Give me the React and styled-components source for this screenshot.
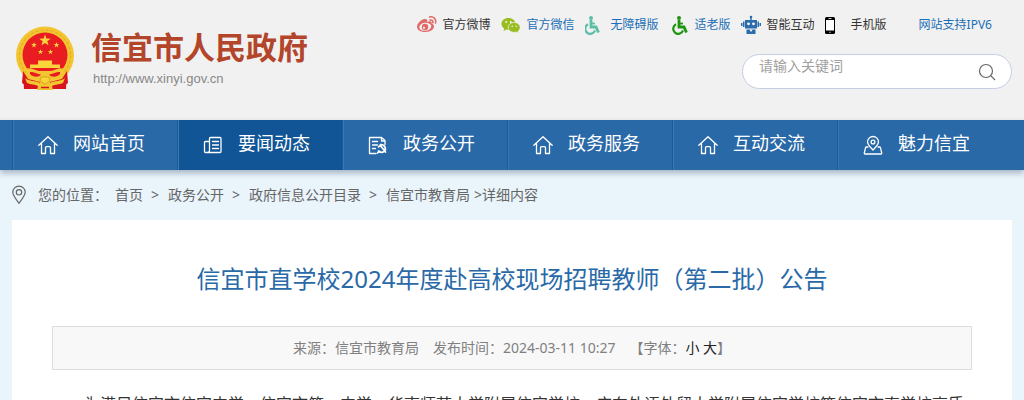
// Xinyi government portal, article page

// External Packages
import React from 'react';
import styled, { createGlobalStyle } from 'styled-components';

const GlobalStyle = createGlobalStyle`
    * {
        box-sizing: border-box;
    }

    body {
        margin: 0;
        background-color: #eaf4fb;
        font-family: 'Noto Sans', 'Noto Sans CJK SC', sans-serif;
        font-size: 14px;
        color: #333;
    }

    a {
        color: inherit;
        text-decoration: none;
    }
`;

const Container = styled.div`
    max-width: 1200px;
    margin: 0 auto;
    padding: 0 12px;
`;

const HeaderWrapper = styled.header`
    background-color: #f1f1f1;
`;

const HeaderInner = styled(Container)`
    display: flex;
    justify-content: space-between;
    min-height: 120px;
`;

const Brand = styled.a`
    display: flex;
    align-items: flex-start;
    gap: 16px;
    padding: 26px 0 0 3px;
`;

const BrandText = styled.div`
    display: flex;
    flex-direction: column;
    white-space: nowrap;
`;

const BrandName = styled.span`
    font-size: 31px;
    line-height: 42px;
    font-weight: 700;
    color: #b2452a;
`;

const BrandUrl = styled.span`
    font-family: 'Liberation Sans', sans-serif;
    font-size: 13px;
    line-height: 22px;
    color: #888;
    padding-left: 2px;
`;

const HeaderSide = styled.div`
    display: flex;
    flex-direction: column;
    align-items: flex-end;
    padding-top: 14px;
`;

const QuickLinks = styled.nav`
    display: flex;
    gap: 10px;
    padding-right: 20px;
    white-space: nowrap;
`;

const QuickLink = styled.a`
    display: flex;
    align-items: center;
    gap: 6px;
    height: 22px;
    font-size: 12px;
    line-height: 22px;
    color: ${props => props.$blue ? '#1a6fb5' : '#333'};
    margin-left: ${props => props.$apart ? '22px' : '0'};
`;

const SearchBox = styled.form`
    display: flex;
    width: 270px;
    height: 35px;
    margin-top: 18px;
    padding: 0 14px 0 16px;
    background-color: white;
    border: 1px solid #c3cfe2;
    border-radius: 18px;
`;

const SearchInput = styled.input`
    flex: 1;
    min-width: 0;
    height: 22px;
    padding: 0;
    border: none;
    outline: none;
    background-color: transparent;
    font-family: inherit;
    font-size: 14px;
    line-height: 22px;

    &::placeholder {
        color: #a0a0a0;
        opacity: 1;
    }
`;

const SearchButton = styled.button`
    display: flex;
    align-items: center;
    padding: 0;
    border: none;
    background-color: transparent;
    cursor: pointer;
`;

const NavBar = styled.nav`
    position: relative;
    background-color: #2969a7;
    box-shadow: 0 3px 6px rgba(60, 80, 110, 0.4);
`;

const NavList = styled(Container)`
    display: flex;
`;

const NavItem = styled.a`
    display: flex;
    flex: 0 1 165px;
    gap: 14px;
    height: 50px;
    padding-left: 24px;
    border-left: 1px solid #1c5a98;
    box-shadow: inset 1px 0 0 #3b78b3;
    background-color: ${props => props.$active ? '#115596' : 'transparent'};
    font-size: 18px;
    line-height: 46px;
    color: white;
    white-space: nowrap;

    svg {
        margin-top: 14px;
    }
`;

const Breadcrumb = styled(Container)`
    display: flex;
    align-items: center;
    height: 50px;
    line-height: 22px;
    color: #666;
    white-space: nowrap;
`;

const CrumbLabel = styled.span`
    margin: 0 7px 0 12px;
`;

const Crumb = styled.a`
    &:not(:last-of-type)::after {
        content: '>';
        margin: 0 9px 0 8px;
    }
`;

const CrumbCurrent = styled.span`
    margin-left: 4px;
`;

const Article = styled.article`
    padding: 38px 40px 40px;
    background-color: white;
`;

const ArticleTitle = styled.h1`
    margin: 0;
    font-size: 24px;
    line-height: 42px;
    font-weight: 400;
    text-align: center;
    color: #2969a7;
`;

const ArticleMeta = styled.div`
    display: flex;
    justify-content: center;
    gap: 14px;
    margin: 26px 0 18px;
    padding: 10px 0;
    background-color: #f8f8f8;
    border: 1px solid #ddd;
    line-height: 22px;
    color: #808080;
`;

const SizeButton = styled.button`
    padding: 0;
    border: none;
    background-color: transparent;
    font: inherit;
    color: #222;
    cursor: pointer;
`;

const ArticleText = styled.p`
    margin: 0;
    font-size: 16px;
    line-height: 32px;
    text-indent: 2em;
`;

const star = (cx, cy, r) => {
    const points = [];
    for (let i = 0; i < 10; i++) {
        const radius = i % 2 ? r * 0.4 : r;
        const angle = Math.PI * (i / 5 - 0.5);
        points.push(`${(cx + radius * Math.cos(angle)).toFixed(2)},${(cy + radius * Math.sin(angle)).toFixed(2)}`);
    }
    return points.join(' ');
};

const Emblem = () => (
    <svg width="60" height="64" viewBox="0 0 60 64" aria-hidden="true">
        <path d="M8 46 9 63h42l1-17z" fill="#d8141c" />
        <circle cx="30" cy="29.500" r="29" fill="#f3c531" />
        <circle cx="30" cy="29.500" r="25.500" fill="none" stroke="#dfa825" strokeWidth="1" strokeDasharray="3 2" />
        <circle cx="30" cy="29" r="22.500" fill="#e91c22" />
        <g fill="#f9d43a">
            <polygon points={star(30, 14.5, 6)} />
            <polygon points={star(19, 19, 3)} />
            <polygon points={star(41.500, 19, 3)} />
            <polygon points={star(25.500, 26, 2.8)} />
            <polygon points={star(35.500, 26, 2.8)} />
            <path d="M23 34.500h14v4h8v3.500H15v-3.500h8z" />
        </g>
        <path d="M11 43c4-2 8 1 13 2h12c5-1 9-4 13-2v8c-5 4-11 3-15 6h-8c-4-3-10-2-15-6z" fill="#f3c531" />
        <path d="M15 46c5 0 7 2 11 2.500-2 3-8 3-11-.5zM45 46c-5 0-7 2-11 2.500 2 3 8 3 11-.5z" fill="#e91c22" />
        <path d="M8 45l5 8 12 3-1 7H9l1-4-3-2zM52 45l-5 8-12 3 1 7h15l-1-4 3-2z" fill="#d8141c" />
        <path d="M10 52c5 4 10 2 15 5h10c5-3 10-1 15-5l-2 5c-4 2-8 1-11 3l1 4H22l1-4c-3-2-7-1-11-3z" fill="#f3c531" />
        <path d="M26 51h8l1 4-5 3-5-3z" fill="#f9d43a" stroke="#d39a1c" strokeWidth=".8" />
        <path d="M26 61.500h8" stroke="#d8141c" strokeWidth="1.500" />
    </svg>
);

const WeiboIcon = () => (
    <svg width="20" height="20" viewBox="0 0 20 20" aria-hidden="true">
        <path d="M7.500 4C4 4.500 0 8.500 0 12c0 3 4 5 8.500 5 5 0 8.500-2.800 8.500-5.500 0-1.700-1.400-2.500-2.500-2.900.8-2.400-1-3-4.500-1.700C10.600 5 10 3.800 7.500 4z" fill="#e06a68" />
        <ellipse cx="8.300" cy="11.800" rx="6" ry="4" fill="#f1f1f1" transform="rotate(-8 8.300 11.800)" />
        <circle cx="8" cy="12" r="3.200" fill="#e06a68" />
        <circle cx="7" cy="12.800" r="1.100" fill="#f1f1f1" />
        <path d="M12.500 2c4-1 7 2 6 6M13 5c2-.4 3.300.8 2.800 2.800" fill="none" stroke="#e06a68" strokeWidth="1.500" strokeLinecap="round" />
    </svg>
);

const WechatIcon = () => (
    <svg width="20" height="20" viewBox="0 0 20 20" aria-hidden="true">
        <path d="M7.500 3C3.300 3 .5 5.500.5 8.800c0 2 1 3.600 2.700 4.700L2.600 16l2.700-1.400 2.200.3c4 0 7-2.600 7-6S11.500 3 7.500 3z" fill="#99bd1f" />
        <path d="M13.200 7.500c3.400 0 6 2.200 6 5 0 1.600-.9 2.900-2.200 3.800l.4 1.900-2.200-1.100-2 .3c-3.400 0-6-2.100-6-4.900s2.600-5 6-5z" fill="#99bd1f" stroke="#f1f1f1" strokeWidth=".8" />
        <g fill="#f1f1f1">
            <circle cx="5.200" cy="7" r="1" />
            <circle cx="9.800" cy="7" r="1" />
            <circle cx="11.200" cy="11.200" r=".8" />
            <circle cx="15.200" cy="11.200" r=".8" />
        </g>
    </svg>
);

// shift moves the figure sideways inside its 20px cell
const WheelchairIcon = ({ color, shift }) => (
    <svg width="20" height="20" viewBox={`${shift} 0 20 20`} aria-hidden="true">
        <circle cx="8" cy="3" r="2" fill={color} />
        <path d="M8 5v7h5l2.500 5.500" fill="none" stroke={color} strokeWidth="2.800" />
        <path d="M8 8.500h4" stroke={color} strokeWidth="1.800" />
        <path d="M5 9.300a5 5 0 1 0 7 6" fill="none" stroke={color} strokeWidth="2.200" />
    </svg>
);

const RobotIcon = () => (
    <svg width="20" height="20" viewBox="0 0 20 20" aria-hidden="true" fill="#2c6cab">
        <path d="M9.300 2h1.400v3H9.300zM4 5h12v8.500H4zM0 8h1.500v3H0zM18.500 8H20v3h-1.500zM2 6.500h1.500v5.500H2zM16.500 6.500H18v5.500h-1.500zM5.500 14.500h9V19h-9z" />
        <circle cx="10" cy="2" r="1.300" />
        <circle cx="7.500" cy="8.800" r="1.400" fill="#fff" />
        <circle cx="12.500" cy="8.800" r="1.400" fill="#fff" />
        <path d="M8.500 14.500h3L10 17z" fill="#fff" />
    </svg>
);

const PhoneIcon = () => (
    <svg width="20" height="20" viewBox="0 0 20 20" aria-hidden="true">
        <rect x="0" y="2" width="10" height="17" rx="1.500" fill="#000" />
        <path d="M1 5h8v10.500H1z" fill="#fff" />
        <path d="M3.500 3.500h3M4.300 17.300h1.400" stroke="#fff" strokeWidth=".8" />
    </svg>
);

const SearchIcon = () => (
    <svg width="20" height="20" viewBox="0 0 20 20" fill="none" stroke="#666" strokeWidth="1.200" aria-hidden="true">
        <circle cx="9" cy="9" r="6.500" />
        <path d="M13.700 13.700 18 18" />
    </svg>
);

const NavSvg = ({ children }) => (
    <svg width="22" height="22" viewBox="0 0 22 22" fill="none" stroke="#fff" strokeWidth="1.300" strokeLinejoin="round" strokeLinecap="round" aria-hidden="true">
        {children}
    </svg>
);

const HomeIcon = () => (
    <NavSvg>
        <path d="M1.800 11.300 11 2.700l9.200 8.600M4.500 9.500v10h4v-5.800q0-1 1-1h3q1 0 1 1v5.800h4v-10" />
    </NavSvg>
);

const NewsIcon = () => (
    <NavSvg>
        <path d="M8.500 3.500h9.500q1 0 1 1v13q0 1-1 1H3.500q-1 0-1-1V8.500q0-1 1-1h4v-3q0-1 1-1zM7.500 7.500v9q0 2-2 2M10.500 7.500h6M10.500 11h6M10.500 14.500h6" />
    </NavSvg>
);

const PartyIcon = () => (
    <NavSvg>
        <path d="M9 19.500H2.500v-16h12l3.500 3v4M14.500 3.500v3.500H18M5.500 7.500h5M5.500 11h5M5.500 14.500h3" />
        <path d="M13.500 10.500c5 0 6 5 3.500 7-2 1.500-4 .8-5.500-.5M11.500 13l1.700-1.700L18.500 18M10.500 19l1.500-1.500" strokeWidth="1.700" />
    </NavSvg>
);

const CharmIcon = () => (
    <NavSvg>
        <path d="M11 16c-4-4-5.500-5.500-5.500-8a5.500 5.500 0 0 1 11 0c0 2.500-1.500 4-5.500 8z" />
        <circle cx="11" cy="8" r="1.900" />
        <path d="M6 13H4.500q-.8 0-1 .8l-1.200 5.200q-.2 1 .7 1h16q.9 0 .7-1l-1.200-5.200q-.2-.8-1-.8H16" />
    </NavSvg>
);

const PinIcon = () => (
    <svg width="14" height="20" viewBox="0 0 14 20" fill="none" stroke="#666" strokeWidth="1.200" aria-hidden="true">
        <path d="M7 18.200C3 13 .8 10.400.8 7.300a6.200 6.200 0 0 1 12.400 0c0 3.100-2.200 5.700-6.200 10.900z" />
        <circle cx="7" cy="7.300" r="2.700" />
    </svg>
);

const quickLinks = [
    { label: '官方微博', icon: <WeiboIcon /> },
    { label: '官方微信', icon: <WechatIcon />, blue: true },
    { label: '无障碍版', icon: <WheelchairIcon color="#5bbfa8" shift={2} />, blue: true },
    { label: '适老版', icon: <WheelchairIcon color="#1f9410" shift={-2} />, blue: true },
    { label: '智能互动', icon: <RobotIcon /> },
    { label: '手机版', icon: <PhoneIcon /> },
    { label: '网站支持IPV6', blue: true, apart: true },
];

const navItems = [
    { label: '网站首页', icon: <HomeIcon /> },
    { label: '要闻动态', icon: <NewsIcon />, active: true },
    { label: '政务公开', icon: <PartyIcon /> },
    { label: '政务服务', icon: <HomeIcon /> },
    { label: '互动交流', icon: <HomeIcon /> },
    { label: '魅力信宜', icon: <CharmIcon /> },
];

const crumbs = ['首页', '政务公开', '政府信息公开目录', '信宜市教育局'];

const App = () => (
    <>
        <GlobalStyle />
        <HeaderWrapper>
            <HeaderInner>
                <Brand href="#">
                    <Emblem />
                    <BrandText>
                        <BrandName>信宜市人民政府</BrandName>
                        <BrandUrl>http://www.xinyi.gov.cn</BrandUrl>
                    </BrandText>
                </Brand>
                <HeaderSide>
                    <QuickLinks>
                        {quickLinks.map(item => (
                            <QuickLink key={item.label} href="#" $blue={item.blue} $apart={item.apart}>
                                {item.icon}
                                {item.label}
                            </QuickLink>
                        ))}
                    </QuickLinks>
                    <SearchBox>
                        <SearchInput type="text" aria-label="请输入关键词" placeholder="请输入关键词" />
                        <SearchButton type="button" aria-label="搜索">
                            <SearchIcon />
                        </SearchButton>
                    </SearchBox>
                </HeaderSide>
            </HeaderInner>
        </HeaderWrapper>

        <NavBar>
            <NavList>
                {navItems.map(item => (
                    <NavItem key={item.label} href="#" $active={item.active}>
                        {item.icon}
                        {item.label}
                    </NavItem>
                ))}
            </NavList>
        </NavBar>

        <Breadcrumb>
            <PinIcon />
            <CrumbLabel>您的位置：</CrumbLabel>
            {crumbs.map(label => <Crumb key={label} href="#">{label}</Crumb>)}
            <CrumbCurrent>&gt;详细内容</CrumbCurrent>
        </Breadcrumb>

        <Container>
            <Article>
                <ArticleTitle>信宜市直学校2024年度赴高校现场招聘教师（第二批）公告</ArticleTitle>
                <ArticleMeta>
                    <span>来源：信宜市教育局</span>
                    <span>发布时间：2024-03-11 10:27</span>
                    <span>
                        【字体：<SizeButton type="button">小</SizeButton> <SizeButton type="button">大</SizeButton>】
                    </span>
                </ArticleMeta>
                <ArticleText>
                    为满足信宜市信宜中学、信宜市第一中学、华南师范大学附属信宜学校、广东外语外贸大学附属信宜学校等信宜市直学校高质
                </ArticleText>
            </Article>
        </Container>
    </>
);

export default App;
